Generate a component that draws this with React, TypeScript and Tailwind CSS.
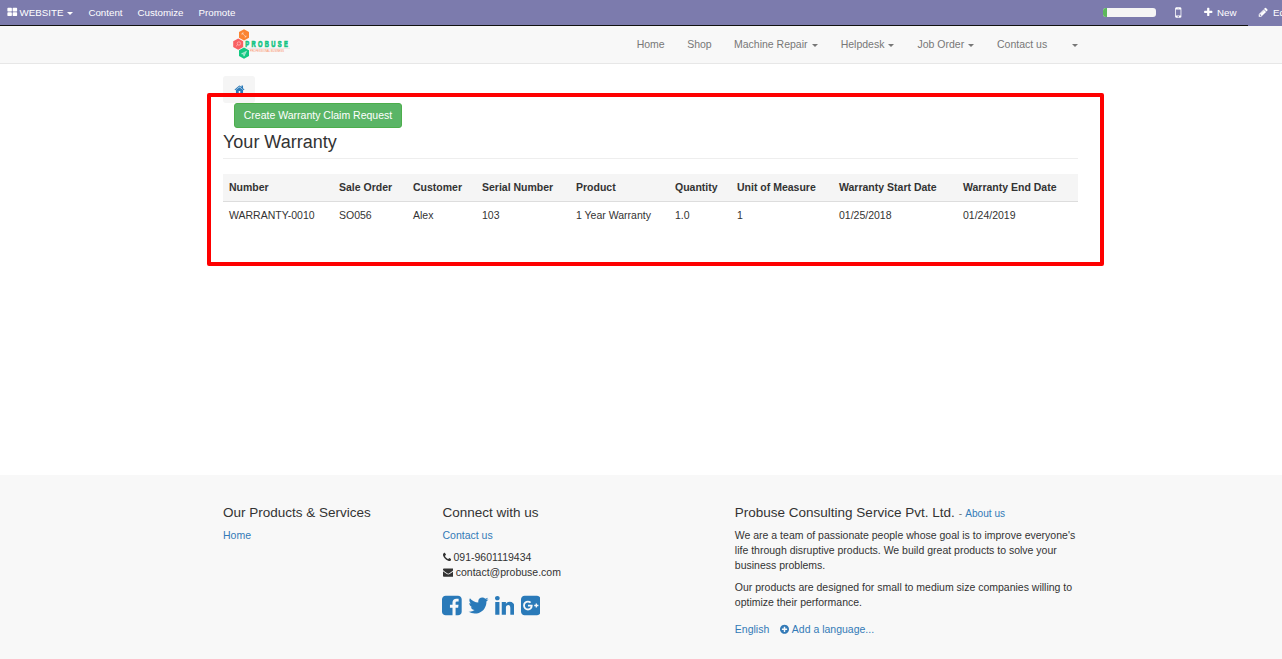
import React from "react";

const ICONS = {
  home: "M1472 992v480q0 26-19 45t-45 19h-384v-384h-256v384h-384q-26 0-45-19t-19-45v-480q0-1 .5-3t.5-3l575-474 575 474q1 2 1 6zm223-69l-62 74q-8 9-21 11h-3q-13 0-21-7l-692-577-692 577q-12 8-24 7-13-2-21-11l-62-74q-8-10-7-23.5t11-21.5l719-599q32-26 76-26t76 26l244 204v-195q0-14 9-23t23-9h192q14 0 23 9t9 23v408l219 182q10 8 11 21.5t-7 23.5z",
  thLarge: "M832 1024v384q0 52-38 90t-90 38h-512q-52 0-90-38t-38-90v-384q0-52 38-90t90-38h512q52 0 90 38t38 90zm0-768v384q0 52-38 90t-90 38h-512q-52 0-90-38t-38-90v-384q0-52 38-90t90-38h512q52 0 90 38t38 90zm896 768v384q0 52-38 90t-90 38h-512q-52 0-90-38t-38-90v-384q0-52 38-90t90-38h512q52 0 90 38t38 90zm0-768v384q0 52-38 90t-90 38h-512q-52 0-90-38t-38-90v-384q0-52 38-90t90-38h512q52 0 90 38t38 90z",
  pencil: "M491 1536l91-91-235-235-91 91v107h128v128h107zm523-928q0-22-22-22-10 0-17 7l-542 542q-7 7-7 17 0 22 22 22 10 0 17-7l542-542q7-7 7-17zm-54-192l416 416-832 832h-416v-416zm683 96q0 53-37 90l-166 166-416-416 166-165q36-38 90-38 53 0 91 38l235 234q37 39 37 91z",
  plus: "M1600 736v192q0 40-28 68t-68 28h-416v416q0 40-28 68t-68 28h-192q-40 0-68-28t-28-68v-416h-416q-40 0-68-28t-28-68v-192q0-40 28-68t68-28h416v-416q0-40 28-68t68-28h192q40 0 68 28t28 68v416h416q40 0 68 28t28 68z",
  phone: "M1600 1240q0 27-10 70.5t-21 68.5q-21 50-122 106-94 51-186 51-27 0-53-3.5t-57.5-12.5-47-14.5-55.5-20.5-49-18q-98-35-175-83-127-79-264-216t-216-264q-48-77-83-175-3-9-18-49t-20.5-55.5-14.5-47-12.5-57.5-3.5-53q0-92 51-186 56-101 106-122 25-11 68.5-21t70.5-10q14 0 21 3 18 6 53 76 11 19 30 54t35 63.5 31 53.5q3 4 17.5 25t21.5 35.5 7 28.5q0 20-28.5 50t-62 55-62 53-28.5 46q0 9 5 22.5t8.5 20.5 14 24 11.5 19q76 137 174 235t235 174q2 1 19 11.5t24 14 20.5 8.5 22.5 5q18 0 46-28.5t53-62 55-62 50-28.5q14 0 28.5 7t35.5 21.5 25 17.5q25 15 53.5 31t63.5 35 54 30q70 35 76 53 3 7 3 21z",
  envelope: "M1792 710v794q0 66-47 113t-113 47h-1472q-66 0-113-47t-47-113v-794q44 49 101 87 362 246 497 345 57 42 92.5 65.5t94.5 48 110 24.5h2q51 0 110-24.5t94.5-48 92.5-65.5q170-123 498-345 57-39 100-87zm0-294q0 79-49 151t-122 123q-376 261-468 325-10 7-42.5 31t-54 38.5-52 32.5-57.5 27-50 9h-2q-23 0-50-9t-57.5-27-52-32.5-54-38.5-42.5-31q-91-64-262-182.5t-205-142.5q-62-42-117-115.5t-55-136.5q0-78 41.5-130t118.5-52h1472q65 0 112.5 47t47.5 113z",
  plusCircle: "M1344 960v-128q0-26-19-45t-45-19h-256v-256q0-26-19-45t-45-19h-128q-26 0-45 19t-19 45v256h-256q-26 0-45 19t-19 45v128q0 26 19 45t45 19h256v256q0 26 19 45t45 19h128q26 0 45-19t19-45v-256h256q26 0 45-19t19-45zm320-64q0 209-103 385.5t-279.5 279.5-385.5 103-385.5-103-279.5-279.5-103-385.5 103-385.5 279.5-279.5 385.5-103 385.5 103 279.5 279.5 103 385.5z",
  facebook: "M1376 128q119 0 203.5 84.5t84.5 203.5v960q0 119-84.5 203.5t-203.5 84.5h-188v-595h199l30-232h-229v-148q0-56 23.5-84t91.5-28l122-1v-207q-63-9-178-9-136 0-217.5 80t-81.5 226v171h-200v232h200v595h-532q-119 0-203.5-84.5t-84.5-203.5v-960q0-119 84.5-203.5t203.5-84.5h960z",
  twitter: "M1684 408q-67 98-162 167 1 14 1 42 0 130-38 259.5t-115.5 248.5-184.5 210.5-258 146-323 54.5q-271 0-496-145 35 4 78 4 225 0 401-138-105-2-188-64.5t-114-159.5q33 5 61 5 43 0 85-11-112-23-185.5-111.5t-73.5-205.5v-4q68 38 146 41-66-44-105-115t-39-154q0-88 44-163 121 149 294.5 238.5t371.5 99.5q-8-38-8-74 0-134 94.5-228.5t228.5-94.5q140 0 236 102 109-21 205-78-37 115-142 178 93-10 186-50z",
  linkedin: "M477 625v991h-330v-991h330zm21-306q1 73-50.5 122t-135.5 49h-2q-82 0-132-49t-50-122q0-74 51.5-122.5t134.5-48.5 133 48.5 51 122.5zm1166 729v568h-329v-530q0-105-40.5-164.5t-126.5-59.5q-63 0-105.5 34.5t-63.5 85.5q-11 30-11 81v553h-329q2-399 2-647t-1-296l-1-48h329v144h-2q20-32 41-56t56.5-52 87-43.5 114.5-15.5q171 0 275 113.5t104 332.5z",
  googlePlus: "M1045 905q0-26-6-64h-362v132h217q-3 24-16.5 50t-37.5 53-66.5 44.5-96.5 17.5q-99 0-169-71t-70-171 70-171 169-71q92 0 153 59l104-101q-108-100-257-100-160 0-272 112.5t-112 271.5 112 271.5 272 112.5q165 0 266.5-105t101.5-270zm345 46h109v-110h-109v-110h-110v110h-110v110h110v110h110v-110zm274-535v960q0 119-84.5 203.5t-203.5 84.5h-960q-119 0-203.5-84.5t-84.5-203.5v-960q0-119 84.5-203.5t203.5-84.5h960q119 0 203.5 84.5t84.5 203.5z",
  mobile: "M976 1408q0-33-23.5-56.5t-56.5-23.5-56.5 23.5-23.5 56.5 23.5 56.5 56.5 23.5 56.5-23.5 23.5-56.5zm208-160v-704q0-13-9.5-22.5t-22.5-9.5h-512q-13 0-22.5 9.5t-9.5 22.5v704q0 13 9.5 22.5t22.5 9.5h512q13 0 22.5-9.5t9.5-22.5zm-192-848q0-16-16-16h-160q-16 0-16 16t16 16h160q16 0 16-16zm288-16v1024q0 52-38 90t-90 38h-512q-52 0-90-38t-38-90v-1024q0-52 38-90t90-38h512q52 0 90 38t38 90z",
};

function Icon({ name, className, box = "0 0 1792 1792" }: { name: keyof typeof ICONS; className: string; box?: string }) {
  return (
    <svg viewBox={box} fill="currentColor" className={`shrink-0 ${className}`} aria-hidden="true">
      <path d={ICONS[name]} />
    </svg>
  );
}

function Caret() {
  return <span className="inline-block h-0 w-0 border-x-[3px] border-t-[3px] border-x-transparent" />;
}

function Logo() {
  return (
    <svg viewBox="0 0 60 32" className="h-8 w-[60px]">
      <path d="M11 .3l5 2.800v5.600l-5 2.800-5-2.800V3.100z" fill="#fb8432" />
      <path d="M5.200 9.500l5 2.800v5.600l-5 2.800-5-2.800v-5.600z" fill="#f95f62" />
      <path d="M11 18.500l5 2.800v5.600l-5 2.800-5-2.800v-5.600z" fill="#12c882" />
      <g fill="none" stroke="#fff" strokeOpacity=".5" strokeWidth=".8">
        <path d="M9 4l4 4M9 6V4h2M11.500 8H13V6.500" />
        <circle cx="5.900" cy="14.500" r="1.700" />
        <path d="M4.700 15.800l-1.800 1.600" />
        <path d="M13.500 22.200l-5 2.500 2 .5.500 2z" fill="#fff" fillOpacity=".5" />
      </g>
      <text
        transform="translate(12.300 17.500) scale(.68 1)"
        fontFamily="Liberation Sans"
        fontSize="8.500"
        fontWeight="700"
        letterSpacing="3.450"
        fill="#16c484"
        stroke="#16c484"
        strokeWidth=".7"
      >
        PROBUSE
      </text>
      <path d="M13 19.300h44" stroke="#e0e0e0" strokeWidth=".8" />
      <text x="17" y="22.600" fontFamily="Liberation Sans" fontSize="2.800" textLength="34" lengthAdjust="spacingAndGlyphs" fill="#fa8a5c">
        PROFESSIONAL BUSINESS
      </text>
    </svg>
  );
}

const COLUMNS = [
  { label: "Number", value: "WARRANTY-0010", width: "w-[110px]" },
  { label: "Sale Order", value: "SO056", width: "w-[74px]" },
  { label: "Customer", value: "Alex", width: "w-[69px]" },
  { label: "Serial Number", value: "103", width: "w-[94px]" },
  { label: "Product", value: "1 Year Warranty", width: "w-[99px]" },
  { label: "Quantity", value: "1.0", width: "w-[62px]" },
  { label: "Unit of Measure", value: "1", width: "w-[102px]" },
  { label: "Warranty Start Date", value: "01/25/2018", width: "w-[124px]" },
  { label: "Warranty End Date", value: "01/24/2019", width: "w-[121px]" },
];

const NAV = [
  { label: "Home", width: "w-[50.5px]", menu: false },
  { label: "Shop", width: "w-[46.8px]", menu: false },
  { label: "Machine Repair", width: "w-[106.7px]", menu: true },
  { label: "Helpdesk", width: "w-[76.8px]", menu: true },
  { label: "Job Order", width: "w-[79.5px]", menu: true },
  { label: "Contact us", width: "w-[74.6px]", menu: false },
];

export default function App() {
  return (
    <div className="relative flex h-[659px] w-full flex-col overflow-hidden bg-white font-['Liberation_Sans',Arial,sans-serif] text-[10.5px] leading-[15px] text-[#333]">
      <header className="flex h-[26px] shrink-0 bg-[#7c7bad] text-[9.75px] whitespace-nowrap text-white">
        <div className="flex h-[26px] w-[1248px] shrink-0 items-center border-b border-[#111] pl-[7px]">
          <div className="flex w-[81.400px] items-center">
            <Icon name="thLarge" className="mr-[2px] h-[10.5px] w-[10.5px]" />
            <span className="mr-[4px]">WEBSITE</span>
            <span className="flex pt-[1px]">
              <Caret />
            </span>
          </div>
          <span className="w-[49.100px]">Content</span>
          <span className="w-[61px]">Customize</span>
          <span>Promote</span>
          <div className="ml-auto flex items-center">
            <div className="h-[9px] w-[53px] overflow-hidden rounded-[3px] bg-[#f5f5f5]">
              <div className="h-full w-1 bg-[#5cb85c]" />
            </div>
            <Icon name="mobile" className="ml-[15px] h-[15px] w-[14.500px]" />
            <Icon name="plus" className="ml-[17px] h-[10.500px] w-[10.500px]" />
            <span className="ml-[4px] w-[31px]">New</span>
          </div>
        </div>
        <div className="flex h-[25px] shrink-0 items-center pl-[10px]">
          <Icon name="pencil" className="h-[10.500px] w-[10.500px]" />
          <span className="ml-[4.500px]">Edit</span>
        </div>
      </header>

      <nav className="flex h-[38px] shrink-0 items-center border-b border-[#e7e7e7] bg-[#f8f8f8] pl-[233px] whitespace-nowrap text-[#777]">
        <div className="w-[403.700px]">
          <Logo />
        </div>
        {NAV.map((item) => (
          <a key={item.label} className={`flex items-center ${item.width}`}>
            {item.label}
            {item.menu && (
              <span className="ml-[4px] flex pt-[1px]">
                <Caret />
              </span>
            )}
          </a>
        ))}
        <span className="flex pt-[1px]">
          <Caret />
        </span>
      </nav>

      <main className="flex h-[411px] shrink-0 flex-col pt-3 pl-[223px]">
        <div className="flex h-[27px] w-8 items-center justify-center rounded-[3px] bg-[#f5f5f5] text-[#2a7ab9]">
          <Icon name="home" className="h-[11px] w-[11px]" />
        </div>
        <button className="ml-[11px] flex h-[25px] w-[168px] items-center justify-center rounded-[3px] border border-[#4cae4c] bg-[#5ab566] whitespace-nowrap text-white">
          Create Warranty Claim Request
        </button>
        <h3 className="mt-[4px] h-[27px] w-[855px] border-b border-[#eee] text-[18px] leading-5">Your Warranty</h3>
        <table className="mt-[15px] w-[855px] table-fixed border-separate border-spacing-0 text-left whitespace-nowrap">
          <thead>
            <tr className="bg-[#f5f5f5]">
              {COLUMNS.map((c) => (
                <th key={c.label} className={`h-[28px] border-b border-[#ddd] p-0 pl-[6px] font-bold ${c.width}`}>
                  {c.label}
                </th>
              ))}
            </tr>
          </thead>
          <tbody>
            <tr className="h-[27px]">
              {COLUMNS.map((c) => (
                <td key={c.label} className="p-0 pl-[6px]">
                  {c.value}
                </td>
              ))}
            </tr>
          </tbody>
        </table>
      </main>

      <footer className="flex h-[184px] shrink-0 bg-[#f8f8f8] pt-[30px] pl-[223px] whitespace-nowrap">
        <section className="w-[219.500px]">
          <h4 className="text-[13.500px]">Our Products &amp; Services</h4>
          <a className="mt-[8px] block text-[#337ab7]">Home</a>
        </section>
        <section className="w-[292.300px]">
          <h4 className="text-[13.500px]">Connect with us</h4>
          <a className="mt-[8px] block text-[#337ab7]">Contact us</a>
          <div className="mt-[7px] flex items-center">
            <Icon name="phone" box="192 0 1408 1792" className="mr-[2.750px] h-[10.500px] w-[8.250px]" />
            091-9601119434
          </div>
          <div className="flex items-center">
            <Icon name="envelope" className="mr-[2.750px] h-[10.500px] w-[10.500px]" />
            contact@probuse.com
          </div>
          <div className="mt-[14px] flex gap-[6.500px] text-[#2a7ab9]">
            <Icon name="facebook" box="128 0 1536 1792" className="-ml-[.5px] mr-[.5px] h-[23px] w-[19.700px]" />
            <Icon name="twitter" box="64 0 1664 1792" className="-ml-[.7px] -mr-[1px] h-[23px] w-[21px]" />
            <Icon name="linkedin" box="128 0 1536 1792" className="h-[23px] w-[19.500px]" />
            <Icon name="googlePlus" box="128 0 1536 1792" className="h-[23px] w-[19.500px]" />
          </div>
        </section>
        <section>
          <h4 className="h-[15px] text-[13.500px]">
            Probuse Consulting Service Pvt. Ltd.
            <small className="ml-[4px] text-[10.125px] text-[#777]">
              - <a className="ml-[.4px] text-[#337ab7]">About us</a>
            </small>
          </h4>
          <p className="mt-[8px]">
            We are a team of passionate people whose goal is to improve everyone's
            <br />
            life through disruptive products. We build great products to solve your
            <br />
            business problems.
          </p>
          <p className="mt-[7px]">
            Our products are designed for small to medium size companies willing to
            <br />
            optimize their performance.
          </p>
          <div className="mt-[12px] flex items-center text-[#337ab7]">
            <span className="w-[45px]">English</span>
            <Icon name="plusCircle" box="128 0 1536 1792" className="mr-[3px] h-[10.500px] w-[9px]" />
            Add a language...
          </div>
        </section>
      </footer>

      <div className="pointer-events-none absolute top-[93px] left-[207px] h-[173px] w-[897px] rounded-[2px] border-4 border-[#fe0000]" />
    </div>
  );
}
